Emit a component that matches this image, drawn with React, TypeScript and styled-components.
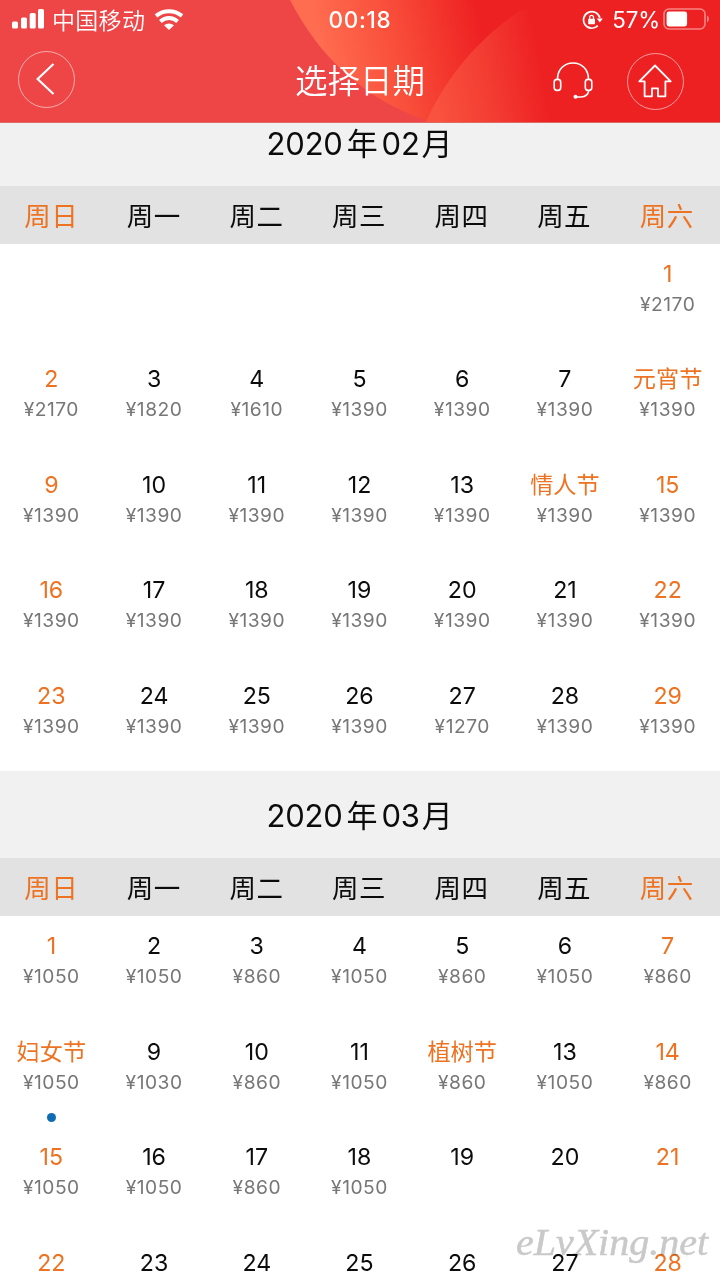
import React from "react";
import styled, { createGlobalStyle } from "styled-components";

const GlobalStyle = createGlobalStyle`
  *, *::before, *::after { box-sizing: border-box; }
  html, body { margin: 0; padding: 0; background: #fff; }
  body { font-family: Inter, "Noto Sans CJK SC", sans-serif; overflow: hidden; }
`;

const ORANGE = "#ed7322";

const Screen = styled.div`
  position: relative;
  width: 720px;
  height: 1280px;
  overflow: hidden;
  display: flex;
  flex-direction: column;
  background: #fff;
`;

const Header = styled.header`
  position: relative;
  z-index: 1;
  flex: none;
  height: 123px;
  background: #ee4547;
  border-bottom: 1px solid #dc6a67;
  color: #fff;
`;

const Backdrop = styled.svg`
  position: absolute;
  inset: 0;
  display: block;
`;

const HeaderContent = styled.div`
  position: relative;
  height: 100%;
`;

const StatusBar = styled.div`
  display: grid;
  grid-template-columns: 1fr auto 1fr;
  align-items: center;
  height: 40px;
  padding: 0 11px 0 12px;
`;

const StatusGroup = styled.div<{ $end?: boolean }>`
  display: flex;
  align-items: center;
  justify-content: ${(p) => (p.$end ? "flex-end" : "flex-start")};
`;

const Carrier = styled.span`
  margin: -3px 9px 0 7px;
  font: 350 23px/36px "Noto Sans CJK SC", sans-serif;
  letter-spacing: 0.3px;
`;

const Clock = styled.span`
  margin-right: 1px;
  font-size: 22.5px;
  font-weight: 500;
  letter-spacing: 0.7px;
  line-height: 40px;
`;

const Percent = styled.span`
  margin: 0 3px 0 9px;
  font-size: 22.3px;
  letter-spacing: -0.1px;
  line-height: 40px;
`;

const NavBar = styled.div`
  display: grid;
  grid-template-columns: 1fr auto 1fr;
  align-items: center;
  height: 82px;
  padding: 0 18px;
`;

const NavActions = styled.div`
  display: flex;
  align-items: center;
  justify-content: flex-end;
  gap: 34px;
  margin-right: 18px;
`;

const Title = styled.h1`
  margin: -4px 0 0;
  font: 350 32.5px/60px "Noto Sans CJK SC", sans-serif;
`;

const RoundButton = styled.button<{ $drop?: number }>`
  display: flex;
  align-items: center;
  justify-content: center;
  width: 57px;
  height: 57px;
  margin: ${(p) => p.$drop ?? 0}px 0 0;
  padding: 0 1px 1px 0;
  border: 1px solid rgba(255, 255, 255, 0.55);
  border-radius: 50%;
  background: transparent;
  color: #fff;
`;

const Calendar = styled.main`
  flex: none;
  margin-top: -24px;
`;

const MonthTitle = styled.h2`
  display: flex;
  align-items: center;
  justify-content: center;
  height: 87px;
  margin: 0;
  padding: 1px 1px 0 0;
  background: #f1f1f1;
  color: #0c0c0c;
  font-size: 31px;
  font-weight: 400;
  letter-spacing: -0.2px;
`;

const MonthUnit = styled.span<{ $month?: boolean }>`
  margin: ${(p) => (p.$month ? "-3px 0 0 2px" : "-3px 4px 0 4px")};
  font: 400 31px/40px "Noto Sans CJK SC", sans-serif;
`;

const WeekRow = styled.div`
  display: grid;
  grid-template-columns: repeat(7, 1fr);
  height: 57.5px;
  padding-right: 2px;
  background: #e2e2e2;
`;

const Weekday = styled.span<{ $weekend: boolean }>`
  text-align: center;
  color: ${(p) => (p.$weekend ? ORANGE : "#0c0c0c")};
  font: 400 26.5px/57px "Noto Sans CJK SC", sans-serif;
  letter-spacing: 0.5px;
`;

const Days = styled.div`
  display: grid;
  grid-template-columns: repeat(7, 1fr);
  grid-auto-rows: 105.6px;
  padding-right: 1px;
  background: #fff;
`;

const Day = styled.div`
  display: flex;
  flex-direction: column;
  align-items: center;
  padding-top: 15px;
`;

const DayLabel = styled.span<{ $accent: boolean }>`
  height: 30px;
  color: ${(p) => (p.$accent ? ORANGE : "#0c0c0c")};
  font-size: 23.2px;
  line-height: 30px;
  white-space: nowrap;
`;

const Price = styled.span`
  height: 30px;
  color: #777;
  font-size: 19.2px;
  line-height: 30px;
  letter-spacing: 0.5px;
`;

const Dot = styled.i`
  width: 9px;
  height: 9px;
  margin-top: 16px;
  border-radius: 50%;
  background: #0e6db2;
`;

const Watermark = styled.svg`
  position: absolute;
  left: 510px;
  top: 1215px;
  mix-blend-mode: multiply;
`;

type DayData = { label: string; price?: number; accent: boolean; dot: boolean } | null;

const month = (
  offset: number,
  count: number,
  prices: number[],
  festivals: Record<number, string>,
  dotted?: number
): DayData[] => {
  const cells: DayData[] = Array(offset).fill(null);
  for (let d = 1; d <= count; d++) {
    const column = (offset + d - 1) % 7;
    cells.push({
      label: festivals[d] ?? String(d),
      price: prices[d - 1],
      accent: column === 0 || column === 6 || d in festivals,
      dot: d === dotted,
    });
  }
  return cells;
};

const februaryPrices = Array(29).fill(1390);
februaryPrices.splice(0, 4, 2170, 2170, 1820, 1610);
februaryPrices[26] = 1270;

const marchPrices = [
  1050, 1050, 860, 1050, 860, 1050, 860,
  1050, 1030, 860, 1050, 860, 1050, 860,
  1050, 1050, 860, 1050,
];

const months = [
  { year: "2020", month: "02", days: month(6, 29, februaryPrices, { 8: "元宵节", 14: "情人节" }) },
  { year: "2020", month: "03", days: month(0, 28, marchPrices, { 8: "妇女节", 12: "植树节" }, 8) },
];

const weekdays = ["周日", "周一", "周二", "周三", "周四", "周五", "周六"];

const HeaderBackdrop = () => (
  <Backdrop width="720" height="122" viewBox="0 0 720 122">
    <defs>
      <linearGradient id="sweep" gradientUnits="userSpaceOnUse" x1="318" y1="40" x2="476" y2="8">
        <stop offset="0" stopColor="#ff6d50" />
        <stop offset="0.45" stopColor="#f94f3b" />
        <stop offset="1" stopColor="#ee2122" />
      </linearGradient>
      <linearGradient id="glow" gradientUnits="userSpaceOnUse" x1="435" y1="112" x2="545" y2="92">
        <stop offset="0" stopColor="#f9533f" />
        <stop offset="0.5" stopColor="#f33d33" />
        <stop offset="1" stopColor="#ee2122" />
      </linearGradient>
    </defs>
    <path d="M290 0C318 54 360 98 430 122H720V0Z" fill="url(#sweep)" />
    <path d="M426 122C445 80 474 42 521 10L720 0V122Z" fill="url(#glow)" />
  </Backdrop>
);

const SignalIcon = () => (
  <svg width="33" height="22" viewBox="0 0 33 22" fill="#fff">
    <rect x="0" y="12.5" width="6" height="7" rx="1.6" />
    <rect x="9" y="8.5" width="6" height="11" rx="1.6" />
    <rect x="17.7" y="4" width="6" height="15.5" rx="1.6" />
    <rect x="26" y="0" width="6" height="19.5" rx="1.6" />
  </svg>
);

const WifiIcon = () => (
  <svg width="30" height="22" viewBox="0 0 30 22" fill="none" stroke="#fff" strokeWidth="4">
    <path d="M2 6.9C9.5 .6 20.5 .6 28 6.9" />
    <path d="M6.4 12.4C11.5 8 18.5 8 23.6 12.4" />
    <path d="M15 21L10 16.2Q15 12.6 20 16.2Z" fill="#fff" stroke="none" />
  </svg>
);

const RotationLockIcon = () => (
  <svg width="21" height="20" viewBox="0 0 21 20" fill="none" stroke="#fff" strokeWidth="1.7">
    <path d="M15.8 15.7A8.3 8.3 0 1 1 17.9 8" />
    <path d="M14.8 8.5H20.8L17.8 12.4Z" fill="#fff" stroke="none" />
    <rect x="6.2" y="8.8" width="6.8" height="5.5" rx=".8" fill="#fff" stroke="none" />
    <path d="M7.7 9V7.3a1.9 1.9 0 0 1 3.8 0V9" strokeWidth="1.3" />
  </svg>
);

const BatteryIcon = () => (
  <svg width="46" height="24" viewBox="0 0 46 24" fill="none">
    <rect x="1" y="1" width="41" height="20" rx="5" stroke="#fff" strokeOpacity=".45" strokeWidth="1.6" />
    <rect x="3.6" y="3.6" width="20.5" height="14.8" rx="2.4" fill="#fff" />
    <path d="M44 7.5Q46 8.3 46 11T44 14.5Z" fill="#fff" fillOpacity=".45" />
  </svg>
);

const BackIcon = () => (
  <svg width="20" height="34" viewBox="0 0 20 34" fill="none" stroke="#fff" strokeWidth="2.1">
    <path d="M17.5 2L1.6 17L17.5 32" />
  </svg>
);

const HeadsetIcon = () => (
  <svg width="40" height="38" viewBox="0 0 40 38" fill="none" stroke="#fff" strokeWidth="1.6">
    <path d="M4.5 17.4C4.5 7.7 11 1 20 1S35.5 7.7 35.5 17.4" />
    <rect x="1.2" y="17.4" width="6.5" height="11" rx="2.8" />
    <rect x="32.3" y="17.4" width="6.5" height="11" rx="2.8" />
    <path d="M35.8 28.4Q34.8 34.8 28 35H23" />
    <circle cx="22.5" cy="34.8" r="2" fill="#fff" stroke="none" />
  </svg>
);

const HomeIcon = () => (
  <svg width="34" height="34" viewBox="0 0 34 34" fill="none" stroke="#fff" strokeWidth="1.8" strokeLinejoin="round">
    <path d="M17 1.5L1.3 17.3H6.6V32.3H14V24.4H20V32.3H27.4V17.3H32.7Z" />
  </svg>
);

export default function App() {
  return (
    <Screen>
      <GlobalStyle />
      <Header>
        <HeaderBackdrop />
        <HeaderContent>
          <StatusBar>
            <StatusGroup>
              <SignalIcon />
              <Carrier>中国移动</Carrier>
              <WifiIcon />
            </StatusGroup>
            <Clock>00:18</Clock>
            <StatusGroup $end>
              <RotationLockIcon />
              <Percent>57%</Percent>
              <BatteryIcon />
            </StatusGroup>
          </StatusBar>
          <NavBar>
            <RoundButton $drop={-4} aria-label="返回">
              <BackIcon />
            </RoundButton>
            <Title>选择日期</Title>
            <NavActions>
              <HeadsetIcon />
              <RoundButton aria-label="首页">
                <HomeIcon />
              </RoundButton>
            </NavActions>
          </NavBar>
        </HeaderContent>
      </Header>
      <Calendar>
        {months.map((m) => (
          <section key={m.month}>
            <MonthTitle>
              {m.year}
              <MonthUnit>年</MonthUnit>
              {m.month}
              <MonthUnit $month>月</MonthUnit>
            </MonthTitle>
            <WeekRow>
              {weekdays.map((name, i) => (
                <Weekday key={name} $weekend={i === 0 || i === 6}>
                  {name}
                </Weekday>
              ))}
            </WeekRow>
            <Days>
              {m.days.map((day, i) => (
                <Day key={i}>
                  {day && <DayLabel $accent={day.accent}>{day.label}</DayLabel>}
                  {day?.price && <Price>¥{day.price}</Price>}
                  {day?.dot && <Dot />}
                </Day>
              ))}
            </Days>
          </section>
        ))}
      </Calendar>
      <Watermark width="205" height="60" viewBox="0 0 205 60">
        <text
          x="6"
          y="40"
          textLength="192"
          lengthAdjust="spacingAndGlyphs"
          fill="#c9c9c9"
          stroke="#c9c9c9"
          strokeWidth="0.5"
          fontFamily="Liberation Serif, serif"
          fontStyle="italic"
          fontSize="38"
        >
          eLvXing.net
        </text>
      </Watermark>
    </Screen>
  );
}
